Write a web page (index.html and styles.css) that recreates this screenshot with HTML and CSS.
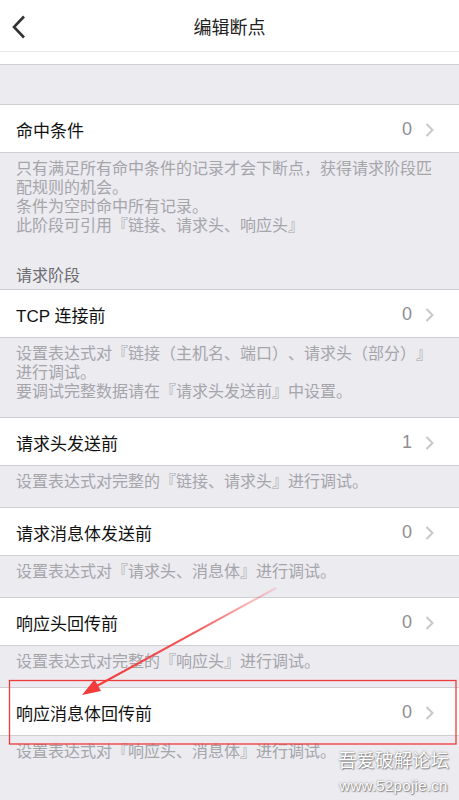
FILE: index.html
```html
<!DOCTYPE html>
<html lang="zh-CN">
<head>
<meta charset="utf-8">
<title>编辑断点</title>
<link rel="stylesheet" href="styles.css">
</head>
<body>
<div class="page">
  <header class="navbar">
    <div class="nav-back">
      <svg width="14" height="24" viewBox="0 0 14 24"><polyline points="12,1.5 2,12 12,22.5" fill="none" stroke="#333" stroke-width="2.6"/></svg>
    </div>
    <div class="nav-title">编辑断点</div>
    <div class="nav-side"></div>
  </header>
  <div class="top-strip"></div>
  <div class="spacer"></div>

  <section class="group">
    <div class="row"><span class="row-label">命中条件</span><span class="row-value">0</span><svg class="chev" width="9" height="14" viewBox="0 0 9 14"><polyline points="1.5,1 7.5,7 1.5,13" fill="none" stroke="#c7c7cc" stroke-width="2"/></svg></div>
  </section>
  <div class="footer">只有满足所有命中条件的记录才会下断点，获得请求阶段匹配规则的机会。<br>条件为空时命中所有记录。<br>此阶段可引用『链接、请求头、响应头』</div>

  <div class="group-header">请求阶段</div>
  <section class="group">
    <div class="row"><span class="row-label">TCP 连接前</span><span class="row-value">0</span><svg class="chev" width="9" height="14" viewBox="0 0 9 14"><polyline points="1.5,1 7.5,7 1.5,13" fill="none" stroke="#c7c7cc" stroke-width="2"/></svg></div>
  </section>
  <div class="footer">设置表达式对『链接（主机名、端口）、请求头（部分）』进行调试。<br>要调试完整数据请在『请求头发送前』中设置。</div>

  <section class="group">
    <div class="row"><span class="row-label">请求头发送前</span><span class="row-value">1</span><svg class="chev" width="9" height="14" viewBox="0 0 9 14"><polyline points="1.5,1 7.5,7 1.5,13" fill="none" stroke="#c7c7cc" stroke-width="2"/></svg></div>
  </section>
  <div class="footer">设置表达式对完整的『链接、请求头』进行调试。</div>

  <section class="group">
    <div class="row"><span class="row-label">请求消息体发送前</span><span class="row-value">0</span><svg class="chev" width="9" height="14" viewBox="0 0 9 14"><polyline points="1.5,1 7.5,7 1.5,13" fill="none" stroke="#c7c7cc" stroke-width="2"/></svg></div>
  </section>
  <div class="footer">设置表达式对『请求头、消息体』进行调试。</div>

  <section class="group">
    <div class="row"><span class="row-label">响应头回传前</span><span class="row-value">0</span><svg class="chev" width="9" height="14" viewBox="0 0 9 14"><polyline points="1.5,1 7.5,7 1.5,13" fill="none" stroke="#c7c7cc" stroke-width="2"/></svg></div>
  </section>
  <div class="footer">设置表达式对完整的『响应头』进行调试。</div>

  <section class="group">
    <div class="row"><span class="row-label">响应消息体回传前</span><span class="row-value">0</span><svg class="chev" width="9" height="14" viewBox="0 0 9 14"><polyline points="1.5,1 7.5,7 1.5,13" fill="none" stroke="#c7c7cc" stroke-width="2"/></svg></div>
  </section>
  <div class="footer">设置表达式对『响应头、消息体』进行调试。</div>

  <svg class="annotation" width="459" height="800" viewBox="0 0 459 800">
    <defs>
      <linearGradient id="fade" gradientUnits="userSpaceOnUse" x1="276" y1="588" x2="96" y2="686">
        <stop offset="0" stop-color="#f23c3c" stop-opacity="0.15"/>
        <stop offset="0.45" stop-color="#f23c3c" stop-opacity="0.85"/>
        <stop offset="1" stop-color="#f23c3c" stop-opacity="1"/>
      </linearGradient>
    </defs>
    <rect x="9.5" y="680.5" width="446.5" height="63.5" fill="none" stroke="#f03a3a" stroke-width="1.3"/>
    <line x1="276" y1="588" x2="95" y2="687" stroke="url(#fade)" stroke-width="2"/>
    <polygon points="82,695 94.5,679.5 101,691" fill="#f23c3c"/>
  </svg>

  <div class="watermark">
    <div class="wm-cn">吾爱破解论坛</div>
    <div class="wm-url">www.52pojie.cn</div>
  </div>
</div>
</body>
</html>
```

FILE: styles.css
```css
html, body {
  margin: 0;
  padding: 0;
  background: #ebebf0;
}

body {
  font-family: "Liberation Sans", "Noto Sans CJK SC", sans-serif;
  text-spacing-trim: space-all;
}

.page {
  position: relative;
  width: 459px;
  min-height: 800px;
  overflow: hidden;
}

.navbar {
  display: grid;
  grid-template-columns: 60px 1fr 60px;
  align-items: center;
  height: 51px;
  background: #fff;
  border-bottom: 1px solid #e6e6e8;
}

.nav-back {
  display: flex;
  align-items: center;
  padding-left: 12px;
  padding-top: 2px;
}

.nav-title {
  text-align: center;
  font-size: 18px;
  color: #222;
  padding-top: 1px;
}

.top-strip {
  height: 12px;
  background: #fff;
  border-bottom: 1px solid #cfced3;
}

.spacer {
  height: 39px;
}

.group {
  background: #fff;
  border-top: 1px solid #cfced3;
  border-bottom: 1px solid #cfced3;
}

.row {
  display: flex;
  align-items: center;
  height: 47px;
  padding: 0 25px 0 16px;
}

.row-label {
  flex: 1;
  font-size: 17px;
  color: #111;
  padding-top: 1px;
}

.row-value {
  font-size: 18px;
  color: #8e8e93;
  margin-right: 13px;
  padding-top: 2px;
}

.chev {
  display: block;
  margin-top: 2px;
}

.footer {
  padding: 6px 16px 16px;
  font-size: 16px;
  line-height: 19px;
  color: #a5a5aa;
}

.group-header {
  padding: 15px 16px 4px;
  font-size: 16px;
  line-height: 19px;
  color: #6d6d72;
}

.annotation {
  position: absolute;
  left: 0;
  top: 0;
  pointer-events: none;
}

.watermark {
  position: absolute;
  left: 338px;
  top: 745px;
  display: flex;
  flex-direction: column;
  align-items: center;
  gap: 3px;
  color: #ffffff;
  text-shadow: 0 0 2px rgba(80, 80, 80, 0.75), 1px 1px 1px rgba(80, 80, 80, 0.55);
}

.wm-cn {
  font-family: "Noto Sans CJK SC", sans-serif;
  font-size: 18.5px;
  line-height: 28px;
}

.wm-url {
  font-family: "Liberation Sans", sans-serif;
  font-size: 15px;
  line-height: 20px;
  letter-spacing: 0.3px;
}
```
